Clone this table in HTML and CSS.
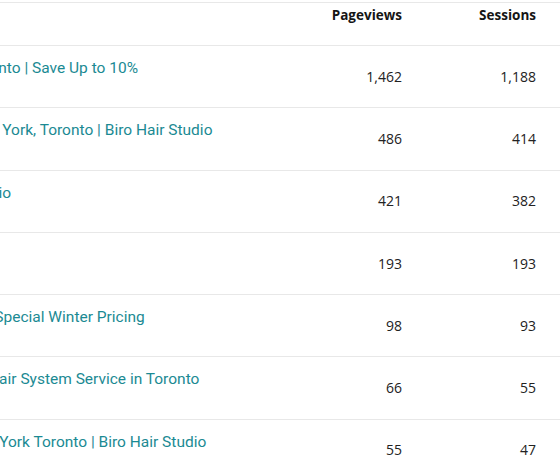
FILE: index.html
```html
<!DOCTYPE html>
<html lang="en">
<head>
  <meta charset="UTF-8">
  <meta name="viewport" content="width=device-width, initial-scale=1.0">
  <link rel="stylesheet" href="styles.css">
  <title>Top Pages</title>
</head>
<body>
  <div class="report">
    <div class="scroller">
      <table class="pages-table">
        <thead>
          <tr>
            <th class="col-title">Page Title</th>
            <th class="col-num">Pageviews</th>
            <th class="col-num">Sessions</th>
          </tr>
        </thead>
        <tbody>
          <tr>
            <td class="col-title"><a href="#">Hair Replacement Solutions in Toronto | Save Up to 10%</a></td>
            <td class="col-num">1,462</td>
            <td class="col-num">1,188</td>
          </tr>
          <tr>
            <td class="col-title"><a href="#">Hair Replacement For Men in North York, Toronto | Biro Hair Studio</a></td>
            <td class="col-num">486</td>
            <td class="col-num">414</td>
          </tr>
          <tr>
            <td class="col-title"><a href="#">Hair Pieces for Men | Biro Hair Studio</a></td>
            <td class="col-num">421</td>
            <td class="col-num">382</td>
          </tr>
          <tr>
            <td class="col-title"><a href="#">Home</a></td>
            <td class="col-num">193</td>
            <td class="col-num">193</td>
          </tr>
          <tr>
            <td class="col-title"><a href="#">Nonsurgical Hair Loss Treatment | Special Winter Pricing</a></td>
            <td class="col-num">98</td>
            <td class="col-num">93</td>
          </tr>
          <tr>
            <td class="col-title"><a href="#">Men's Hair System Maintenance | Hair System Service in Toronto</a></td>
            <td class="col-num">66</td>
            <td class="col-num">55</td>
          </tr>
          <tr>
            <td class="col-title"><a href="#">Ladies Hair Replacements in North York Toronto | Biro Hair Studio</a></td>
            <td class="col-num">55</td>
            <td class="col-num">47</td>
          </tr>
        </tbody>
      </table>
    </div>
  </div>
</body>
</html>
```

FILE: styles.css
```css
body {
  margin: 0;
  padding: 0;
  background-color: #fff;
  font-family: 'Open Sans', sans-serif;
  color: #222;
}

.report {
  padding-top: 2px;
  width: 560px;
}

/* table is scrolled sideways, first column runs off the left edge */
.scroller {
  overflow: hidden;
}

.pages-table {
  border-collapse: collapse;
  margin-left: -244px;
  width: 804px;
  table-layout: fixed;
}

.pages-table th,
.pages-table td {
  border-top: 1px solid #e8e8e8;
  font-size: 14px;
  line-height: 20px;
  padding: 0;
}

.pages-table th {
  height: 40px;
  padding-top: 2px;
  vertical-align: top;
  font-weight: 700;
  font-size: 13.5px;
  color: #151515;
}

.pages-table td {
  height: 61.3px;
}

.col-title {
  text-align: left;
  white-space: nowrap;
  overflow: hidden;
}

td.col-title {
  vertical-align: top;
  height: 49.3px;
  padding-top: 12px;
}

.col-title a {
  color: #1b8a93;
  font-family: Roboto, 'Open Sans', sans-serif;
  font-size: 15.5px;
  text-decoration: none;
}

.col-num {
  width: 134px;
  text-align: right;
  vertical-align: middle;
  white-space: nowrap;
}

.pages-table tr > :last-child {
  padding-right: 24px;
}
```
